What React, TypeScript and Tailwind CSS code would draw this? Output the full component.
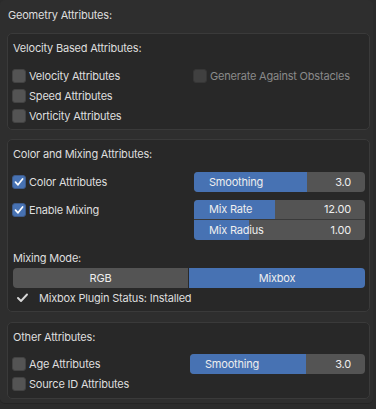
import React from "react";

function Checkbox({ checked = false, disabled = false }: { checked?: boolean; disabled?: boolean }) {
  if (checked) {
    return (
      <div className="w-[14px] h-[14px] rounded-[3px] bg-[#4772b3] border border-[#3d5a8a] flex items-center justify-center shrink-0">
        <svg width="10" height="10" viewBox="0 0 10 10">
          <polyline points="1.5,5.2 4,7.8 8.6,2" fill="none" stroke="#ffffff" strokeWidth="1.7" strokeLinecap="round" strokeLinejoin="round" />
        </svg>
      </div>
    );
  }
  if (disabled) {
    return <div className="w-[14px] h-[14px] rounded-[3px] bg-[#404040] border border-[#363636] shrink-0" />;
  }
  return <div className="w-[14px] h-[14px] rounded-[3px] bg-[#545454] border border-[#434343] shrink-0" />;
}

function CheckRow({ label, checked = false, disabled = false }: { label: string; checked?: boolean; disabled?: boolean }) {
  return (
    <div className="flex items-center h-[20px]">
      <Checkbox checked={checked} disabled={disabled} />
      <span className={disabled ? "ml-[3px] text-[#8a8a8a]" : "ml-[3px]"}>{label}</span>
    </div>
  );
}

export default function App() {
  return (
    <div className="w-[376px] h-[409px] bg-[#2b2b2b] text-[11px] leading-none tracking-[-0.2px] text-[#dedede] font-['Inter',sans-serif] overflow-hidden">
      <div className="w-[373px] h-[404px] bg-[#2e2e2e] rounded-[5px] border-b border-[#242424] flex flex-col">
        <div className="h-[30px] pl-[8px] flex items-center">Geometry Attributes:</div>

        {/* Box 1 */}
        <div className="mt-[3px] ml-[7px] w-[363px] bg-[#282828] border border-[#3a3a3a] rounded-[5px] flex flex-col pb-[3px]">
          <div className="h-[28px] pl-[5px] flex items-center">Velocity Based Attributes:</div>
          <div className="mt-[4px] pl-[4px] flex flex-col">
            <div className="flex items-center h-[20px]">
              <div className="w-[181px]">
                <CheckRow label="Velocity Attributes" />
              </div>
              <CheckRow label="Generate Against Obstacles" disabled />
            </div>
            <CheckRow label="Speed Attributes" />
            <CheckRow label="Vorticity Attributes" />
          </div>
        </div>

        {/* Box 2 */}
        <div className="mt-[9px] ml-[7px] w-[363px] bg-[#282828] border border-[#3a3a3a] rounded-[5px] flex flex-col pb-[3px]">
          <div className="h-[28px] pl-[5px] flex items-center">Color and Mixing Attributes:</div>
          <div className="mt-[4px] pl-[4px] flex items-center h-[20px]">
            <div className="w-[182px]">
              <CheckRow label="Color Attributes" checked />
            </div>
            <div className="relative w-[171px] h-[20px] rounded-[4px] bg-[#545454] overflow-hidden text-[#eeeeee]">
              <div className="absolute inset-y-0 left-0 w-[113px] bg-[#4772b3]" />
              <div className="relative h-full flex items-center justify-between pl-[15px] pr-[14px]">
                <span>Smoothing</span>
                <span>3.0</span>
              </div>
            </div>
          </div>
          <div className="mt-[8px] pl-[4px] flex items-start h-[40px]">
            <div className="w-[182px]">
              <CheckRow label="Enable Mixing" checked />
            </div>
            <div className="w-[171px] h-[40px] rounded-[4px] bg-[#545454] overflow-hidden text-[#eeeeee] flex flex-col">
              <div className="relative h-[20px] border-b border-[#3a3a3a]">
                <div className="absolute inset-y-0 left-0 w-[81px] bg-[#4772b3]" />
                <div className="relative h-full flex items-center justify-between pl-[15px] pr-[14px]">
                  <span>Mix Rate</span>
                  <span>12.00</span>
                </div>
              </div>
              <div className="relative h-[20px]">
                <div className="absolute inset-y-0 left-0 w-[55px] bg-[#4772b3]" />
                <div className="relative h-full flex items-center justify-between pl-[15px] pr-[14px]">
                  <span>Mix Radius</span>
                  <span>1.00</span>
                </div>
              </div>
            </div>
          </div>
          <div className="mt-[8px] h-[20px] pl-[5px] flex items-center">Mixing Mode:</div>
          <div className="ml-[5px] w-[352px] h-[20px] flex rounded-[4px] overflow-hidden text-[#eeeeee]">
            <div className="w-[175px] h-full bg-[#545454] flex items-center justify-center">RGB</div>
            <div className="w-[1px] h-full bg-[#2a2a2a]" />
            <div className="w-[176px] h-full bg-[#4772b3] flex items-center justify-center">Mixbox</div>
          </div>
          <div className="h-[20px] flex items-center pl-[9px]">
            <svg width="11" height="10" viewBox="0 0 11 10" className="shrink-0">
              <polyline points="1,5 4,8 10,1.5" fill="none" stroke="#d8d8d8" strokeWidth="1.9" strokeLinecap="round" strokeLinejoin="round" />
            </svg>
            <span className="ml-[11px]">Mixbox Plugin Status: Installed</span>
          </div>
        </div>

        {/* Box 3 */}
        <div className="mt-[10px] ml-[7px] w-[363px] bg-[#282828] border border-[#3a3a3a] rounded-[5px] flex flex-col pb-[4px]">
          <div className="h-[28px] pl-[5px] flex items-center">Other Attributes:</div>
          <div className="mt-[3px] pl-[4px] flex items-center h-[20px]">
            <div className="w-[178px]">
              <CheckRow label="Age Attributes" />
            </div>
            <div className="relative w-[175px] h-[20px] rounded-[4px] bg-[#545454] overflow-hidden text-[#eeeeee]">
              <div className="absolute inset-y-0 left-0 w-[116px] bg-[#4772b3]" />
              <div className="relative h-full flex items-center justify-between pl-[15px] pr-[14px]">
                <span>Smoothing</span>
                <span>3.0</span>
              </div>
            </div>
          </div>
          <div className="pl-[4px]">
            <CheckRow label="Source ID Attributes" />
          </div>
        </div>
      </div>
    </div>
  );
}
